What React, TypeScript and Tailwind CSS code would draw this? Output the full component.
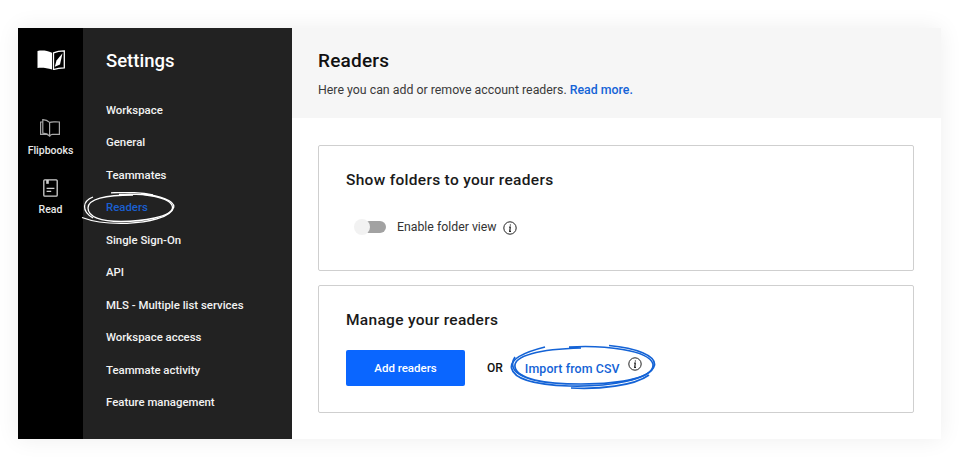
const navItems = [
  "Workspace",
  "General",
  "Teammates",
  "Readers",
  "Single Sign-On",
  "API",
  "MLS - Multiple list services",
  "Workspace access",
  "Teammate activity",
  "Feature management",
];

function InfoIcon({ className }: { className?: string }) {
  return (
    <svg viewBox="0 0 14 14" className={className} fill="none" stroke="currentColor">
      <circle cx="7" cy="7" r="6.2" strokeWidth="1" />
      <path d="M7.4 3.5v1.1M6.1 6.2h1.2L6.7 10.3H8" strokeWidth="1.2" />
    </svg>
  );
}

function Logo() {
  return (
    <svg width="28" height="20" viewBox="0 0 28 20">
      <path d="M0.5 1C5 0.2 10 0.5 15 2.8V19.500C10 18 5 17.500 0.5 18Z" fill="#fff" />
      <path d="M16.500 2.800C20 1.200 23 0.800 27.300 0.800V17.800C23 17.800 20 18.200 16.500 19.500Z" fill="none" stroke="#fff" strokeWidth="1.300" />
      <path d="M25.500 3.200L19.500 10.500L17.800 16.800L23 14.500Z" fill="#fff" />
    </svg>
  );
}

function BookIcon() {
  return (
    <svg width="20" height="18" viewBox="0 0 20 18" fill="none" stroke="#a8a8a8" strokeWidth="1.200">
      <path d="M2.800 3H0.600V15.300H8.200" />
      <path d="M2.800 0.700C5.500 0.800 7.800 1.800 9.600 3.400V17C7.800 15.300 5.500 14.200 2.800 14.100Z" />
      <path d="M9.600 3.400C11.200 2.500 13.500 2.900 19.400 3V15.300H12.500C11.300 15.300 10.400 15.900 9.600 17" />
    </svg>
  );
}

function ReadIcon() {
  return (
    <svg width="15" height="18" viewBox="0 0 15 18" fill="none" stroke="#d0d0d0" strokeWidth="1.300">
      <rect x="0.800" y="0.800" width="13.400" height="16.400" rx="1" />
      <path d="M3.200 1h2.600v3.800H3.200z" fill="#d0d0d0" stroke="none" />
      <path d="M3.600 9.400h7.800M3.600 12.400h4.600" />
    </svg>
  );
}

export default function App() {
  return (
    <div
      className="w-[960px] h-[468px] bg-white pl-[18px] pt-[28px] overflow-hidden"
      style={{ fontFamily: "Roboto, sans-serif" }}
    >
      <div className="w-[923px] h-[411px] flex bg-white shadow-[0_0_22px_rgba(0,0,0,0.07)]">
        <div className="w-[65px] shrink-0 bg-black flex flex-col items-center pt-[22px]">
          <Logo />
          <div className="mt-[49px] flex flex-col items-center">
            <BookIcon />
            <span className="mt-[7px] text-[10.5px] leading-[14px] font-medium text-[#e8e8e8]">Flipbooks</span>
          </div>
          <div className="mt-[21px] flex flex-col items-center">
            <ReadIcon />
            <span className="mt-[6px] text-[10.5px] leading-[14px] font-medium text-[#e8e8e8]">Read</span>
          </div>
        </div>

        <div className="w-[209px] shrink-0 bg-[#222222] pl-[23px] relative">
          <h1 className="mt-[19px] text-[18.5px] leading-[28px] font-medium text-white">Settings</h1>
          <ul className="mt-[19px]">
            {navItems.map((item) => (
              <li
                key={item}
                className={
                  "h-[32.5px] flex items-center text-[11.4px] font-medium " +
                  (item === "Readers" ? "text-[#1a5fd0]" : "text-[#f2f2f2]")
                }
              >
                {item}
              </li>
            ))}
          </ul>
          <svg
            className="absolute left-[-2px] top-[164px] pointer-events-none"
            width="96"
            height="36"
            viewBox="0 0 96 36"
            fill="none"
            stroke="#fff"
            strokeWidth="1.300"
          >
            <path d="M38 2.500C62 1 90 5 91.500 15C92.500 25 60 29.500 40 29.500C20 29.500 7 25 7 16C7 7 24 3 52 3" />
            <path d="M1 25.500C14 30.500 30 31.800 46 31.300C66 30.500 90 26 92.800 15C93.500 9 80 3.500 60 2" />
            <path d="M12 5C1.500 9 0 19 12 26" />
            <path d="M30 0.800C45 0 60 0.300 72 3" />
          </svg>
        </div>

        <div className="flex-1 min-w-0 bg-white">
          <div className="h-[90px] bg-[#f6f6f6] pl-[26px] pt-[20px]">
            <h2 className="text-[19px] leading-[26px] font-medium text-[#111111] tracking-[0.2px]">Readers</h2>
            <p className="mt-[7px] text-[12.35px] leading-[18px] text-[#3a3a3a]">
              Here you can add or remove account readers.{" "}
              <span className="font-medium text-[#1463d6]">Read more.</span>
            </p>
          </div>

          <div className="pl-[26px] pr-[27px] pt-[27px] flex flex-col gap-[14px]">
            <section className="h-[126px] border border-[#cfcfcf] rounded-[2px] pl-[27px] pt-[24px]">
              <h3 className="text-[15.5px] leading-[20px] font-medium text-[#1a1a1a] tracking-[0.3px]">Show folders to your readers</h3>
              <div className="mt-[29px] ml-[8px] flex items-center">
                <div className="relative w-[32px] h-[12px] flex items-center justify-end">
                  <div className="w-[24px] h-[12px] rounded-full bg-[#a2a2a2]" />
                  <div className="absolute left-0 top-[-2px] w-[16px] h-[16px] rounded-full bg-[#f2f2f2]" />
                </div>
                <span className="ml-[11px] text-[12.3px] leading-[16px] text-[#333333]">Enable folder view</span>
                <InfoIcon className="ml-[6px] mt-[2px] w-[14px] h-[14px] text-[#222222]" />
              </div>
            </section>

            <section className="h-[128px] border border-[#cfcfcf] rounded-[2px] pl-[27px] pt-[24px]">
              <h3 className="text-[15.5px] leading-[20px] font-medium text-[#1a1a1a] tracking-[0.3px]">Manage your readers</h3>
              <div className="mt-[20px] flex items-center">
                <button className="w-[119px] h-[36px] pt-[1px] rounded-[2px] bg-[#0a66ff] text-white text-[11.5px] font-medium">
                  Add readers
                </button>
                <span className="ml-[22px] text-[12px] font-medium text-[#111111]">OR</span>
                <div className="relative ml-[22px] flex items-start">
                  <span className="mt-[1px] text-[12.4px] leading-[16px] font-medium text-[#1463d6] tracking-[0.1px]">Import from CSV</span>
                  <InfoIcon className="ml-[8px] mt-[-3px] w-[14px] h-[14px] text-[#222222]" />
                  <svg
                    className="absolute left-[-16px] top-[-17px] pointer-events-none"
                    width="148"
                    height="48"
                    viewBox="0 0 148 48"
                    fill="none"
                    stroke="#1463d6"
                    strokeWidth="1.700"
                  >
                    <path d="M60 4C95 2 140 7 144 21C146 34 115 41 72 41C35 41 8 36 6 24C4 13 30 6 72 5" />
                    <path d="M36 4C16 9 1 16 2.500 25C5 37 30 42 60 43C100 44 142 37 145.500 22C146.500 13 128 5 100 2.500" />
                    <path d="M62 45C90 46.500 125 43 140 32" />
                    <path d="M6 14C1 22 4 29 14 33" />
                  </svg>
                </div>
              </div>
            </section>
          </div>
        </div>
      </div>
    </div>
  );
}
